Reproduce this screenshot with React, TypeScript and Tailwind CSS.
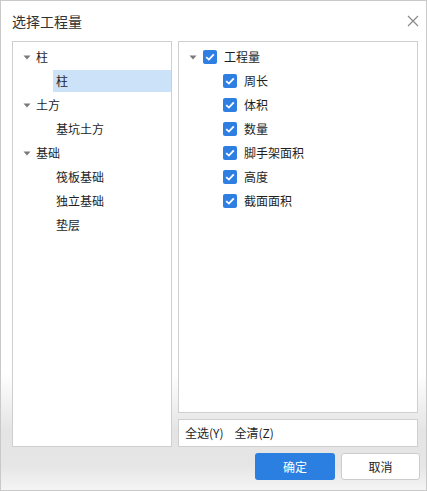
const font = { fontFamily: '"Noto Sans CJK SC", "Noto Sans", sans-serif' };

function Arrow() {
  return (
    <svg width="8" height="5" viewBox="0 0 8 5" className="shrink-0">
      <path d="M0.5 0.5 L7.5 0.5 L4 4.5 Z" fill="#7a7a7a" />
    </svg>
  );
}

function Check() {
  return (
    <span className="flex h-[14px] w-[14px] shrink-0 items-center justify-center rounded-[2px] bg-[#2f7fe3]">
      <svg width="10" height="8" viewBox="0 0 10 8">
        <path d="M1.2 4.2 L3.9 6.6 L8.8 1.3" fill="none" stroke="#fff" strokeWidth="1.8" />
      </svg>
    </span>
  );
}

const leftTree = [
  { label: '柱', children: ['柱'] },
  { label: '土方', children: ['基坑土方'] },
  { label: '基础', children: ['筏板基础', '独立基础', '垫层'] },
];

const quantities = ['周长', '体积', '数量', '脚手架面积', '高度', '截面面积'];

export default function App() {
  return (
    <div
      className="flex h-[491px] w-[427px] flex-col border border-[#c9c9c9] bg-[linear-gradient(to_bottom,#ffffff_0%,#ffffff_76%,#e4e4e4_88%,#e6e6e6_95%,#f4f4f4_100%)] text-[12px] text-[#1e1e1e]"
      style={font}
    >
      <div className="flex h-[40px] shrink-0 items-center justify-between pl-[11px] pr-[7px]">
        <span className="text-[14px] text-[#333]">选择工程量</span>
        <svg width="12" height="12" viewBox="0 0 12 12">
          <path d="M1 1 L11 11 M11 1 L1 11" stroke="#8a8a8a" strokeWidth="1.2" />
        </svg>
      </div>

      <div className="flex gap-[6px] pl-[11px]">
        <div className="h-[406px] w-[160px] border border-[#cfcfcf] bg-white pt-[3px]">
          {leftTree.map((node, i) => (
            <div key={i}>
              <div className="flex h-6 items-center pl-[10px]">
                <Arrow />
                <span className="ml-[5px]">{node.label}</span>
              </div>
              {node.children.map((c, j) => (
                <div key={j} className="flex h-6 items-center pl-[40px]">
                  <span
                    className={
                      i === 0 && j === 0
                        ? 'flex h-[22px] flex-1 items-center bg-[#cce2f8] pl-[3px]'
                        : 'flex h-[22px] flex-1 items-center pl-[3px]'
                    }
                  >
                    {c}
                  </span>
                </div>
              ))}
            </div>
          ))}
        </div>

        <div className="flex w-[240px] flex-col gap-[6px]">
          <div className="h-[372px] border border-[#cfcfcf] bg-white pt-[3px]">
            <div className="flex h-6 items-center pl-[10px]">
              <Arrow />
              <span className="ml-[6px]">
                <Check />
              </span>
              <span className="ml-[7px]">工程量</span>
            </div>
            {quantities.map((q) => (
              <div key={q} className="flex h-6 items-center pl-[44px]">
                <Check />
                <span className="ml-[7px]">{q}</span>
              </div>
            ))}
          </div>
          <div className="flex h-[28px] items-center gap-[11px] border border-[#cfcfcf] bg-white pl-[6px]">
            <span>全选(Y)</span>
            <span>全清(Z)</span>
          </div>
          <div className="-mr-[2px] flex justify-end gap-[6px]">
            <button className="h-[27px] w-[80px] rounded-[3px] bg-[#2b7fe0] text-[12px] text-white">
              确定
            </button>
            <button className="h-[27px] w-[79px] rounded-[3px] border border-[#cccccc] bg-white text-[12px] text-[#222]">
              取消
            </button>
          </div>
        </div>
      </div>
    </div>
  );
}
